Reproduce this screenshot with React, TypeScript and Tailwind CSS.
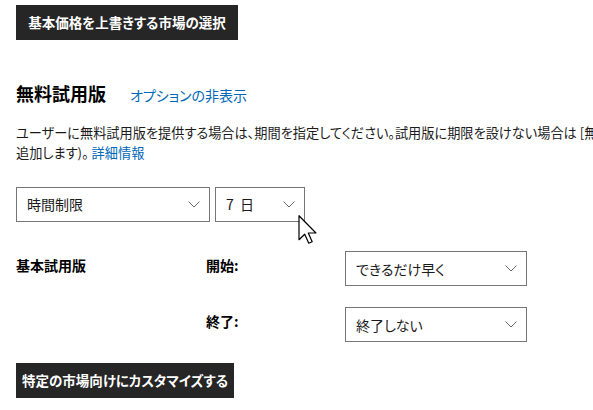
import clsx from "clsx";

function Chevron() {
    return (
        <svg width="12" height="7" viewBox="0 0 12 7" className="shrink-0">
            <polyline points="0.5,0.5 6,6 11.5,0.5" fill="none" stroke="#6b6b6b" strokeWidth="1" />
        </svg>
    );
}

function Select({ value, className }: { value: string; className?: string }) {
    return (
        <div
            className={clsx(
                "flex h-[35px] items-center justify-between border border-[#767676] bg-white pl-[10px] pr-[9px] text-[14px] text-[#1a1a1a]",
                className
            )}
        >
            <span className="whitespace-pre">{value}</span>
            <Chevron />
        </div>
    );
}

function DarkButton({ label, className }: { label: string; className?: string }) {
    return (
        <button
            className={clsx(
                "flex h-[35px] items-center justify-center whitespace-nowrap bg-[#262626] text-[13.5px] font-bold text-white",
                className
            )}
        >
            {label}
        </button>
    );
}

function Cursor() {
    return (
        <svg
            width="20"
            height="30"
            viewBox="0 0 13 20"
            className="pointer-events-none absolute left-[298px] top-[215px]"
        >
            <polygon
                points="0.5,0.5 0.5,16.5 4.3,12.8 7,18.8 9.3,17.8 6.7,12 11.8,12"
                fill="#fff"
                stroke="#000"
                strokeWidth="0.8"
                strokeLinejoin="round"
            />
        </svg>
    );
}

export default function App() {
    return (
        <div className="relative h-[410px] w-[593px] overflow-hidden bg-white pl-4 font-['Noto_Sans_CJK_JP',sans-serif] text-black [font-feature-settings:'palt']">
            <DarkButton label="基本価格を上書きする市場の選択" className="mt-[5px] w-[222px]" />

            <div className="mt-[41px] flex items-baseline gap-[24px]">
                <h2 className="text-[18px] font-bold leading-[24px]">無料試用版</h2>
                <a href="#" className="text-[14px] text-[#0067b8]">
                    オプションの非表示
                </a>
            </div>

            <p className="mt-[17px] w-[900px] text-[13.2px] leading-[20px] text-[#1a1a1a]">
                <span className="whitespace-nowrap">
                    ユーザーに無料試用版を提供する場合は、期間を指定してください。試用版に期限を設けない場合は [無制限] を選択します (プランに試用版を
                </span>
                <br />
                追加します)。 <a href="#" className="text-[#0067b8]">詳細情報</a>
            </p>

            <div className="mt-[24px] flex gap-[5px]">
                <Select value="時間制限" className="w-[194px]" />
                <Select value="7  日" className="w-[90px]" />
            </div>

            <div className="mt-[29px] grid grid-cols-[190px_139px_182px] items-start gap-y-[21px] text-[14px] font-bold leading-[20px]">
                <span className="pt-[4px]">基本試用版</span>
                <span className="pt-[4px]">開始:</span>
                <Select value="できるだけ早く" className="font-normal" />
                <span />
                <span className="pt-[4px]">終了:</span>
                <Select value="終了しない" className="font-normal" />
            </div>

            <DarkButton label="特定の市場向けにカスタマイズする" className="mt-[21px] w-[218px]" />

            <Cursor />
        </div>
    );
}
